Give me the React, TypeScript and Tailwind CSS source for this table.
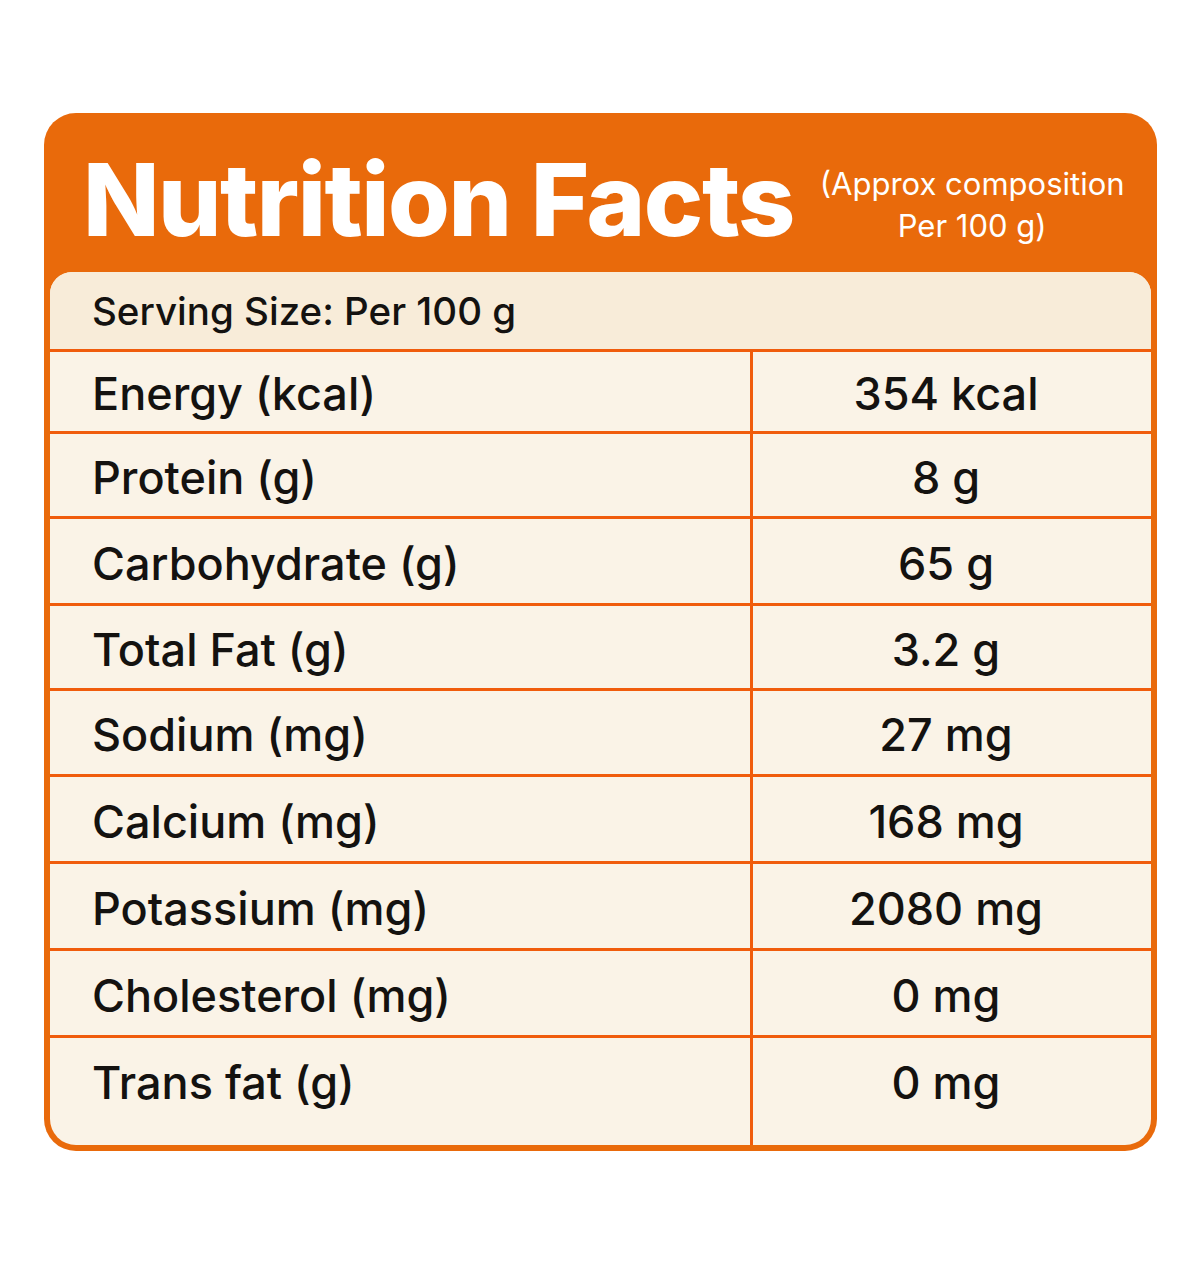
import React from "react";

const rows: [string, string][] = [
  ["Energy (kcal)", "354 kcal"],
  ["Protein (g)", "8 g"],
  ["Carbohydrate (g)", "65 g"],
  ["Total Fat (g)", "3.2 g"],
  ["Sodium (mg)", "27 mg"],
  ["Calcium (mg)", "168 mg"],
  ["Potassium (mg)", "2080 mg"],
  ["Cholesterol (mg)", "0 mg"],
  ["Trans fat (g)", "0 mg"],
];

const heights = ["h-[82px]", "h-[85px]", "h-[87px]", "h-[85px]", "h-[86px]", "h-[87px]", "h-[87px]", "h-[87px]", "h-[107px]"];

export default function App() {
  return (
    <div className="w-[1200px] h-[1264px] bg-white pt-[113px] pl-[44px]" style={{ fontFamily: 'Inter, "Noto Sans", sans-serif' }}>
      <div className="w-[1113px] rounded-[32px] bg-[#e96a0b] px-[6px] pb-[6px]">
        <div className="h-[159px] flex items-start">
          <div className="pl-[33px] pt-[32px] text-white font-extrabold text-[100px] leading-[110px] tracking-[-1.5px]">
            Nutrition Facts
          </div>
          <div className="ml-[26px] pt-[50px] text-white text-[31px] leading-[42px] text-center">
            (Approx composition<br />Per 100 g)
          </div>
        </div>
        <div className="rounded-t-[22px] rounded-b-[26px] bg-[#faf3e7] overflow-hidden text-[#141210] font-medium">
          <div className="h-[80px] bg-[#f8ecd9] border-b-[3px] border-[#f05c0c] flex items-center pl-[42px] pt-[3px] text-[38.5px]">
            Serving Size: Per 100 g
          </div>
          {rows.map(([k, v], i) => (
            <div key={k} className={`flex ${heights[i]} ${i < rows.length - 1 ? "border-b-[3px] border-[#f05c0c]" : ""}`}>
              <div className="w-[703px] border-r-[3px] border-[#f05c0c] flex items-center pl-[42px] text-[45px]">
                <span className={i === rows.length - 1 ? "-mt-[18px]" : "mt-[5px]"}>{k}</span>
              </div>
              <div className="flex-1 flex items-center justify-center text-[45px] pr-[12px]">
                <span className={i === rows.length - 1 ? "-mt-[18px]" : "mt-[5px]"}>{v}</span>
              </div>
            </div>
          ))}
        </div>
      </div>
    </div>
  );
}
